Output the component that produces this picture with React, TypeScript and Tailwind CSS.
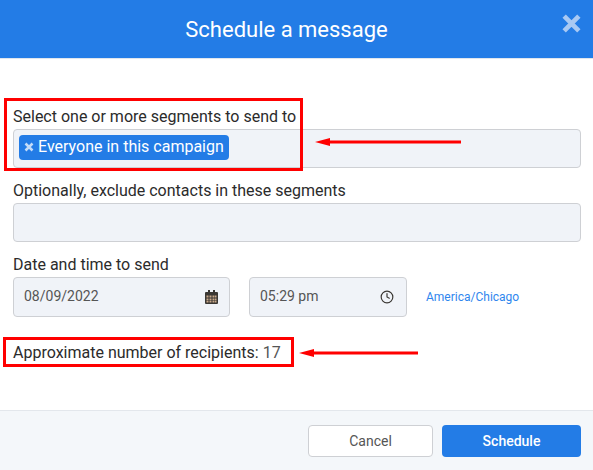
import { Clock } from 'lucide-react'

const fieldBox = 'rounded-[4px] border border-[#ced0d4] bg-[#f0f3f8]'

function CrossIcon({ size, stroke, className }: { size: number; stroke: number; className: string }) {
  return (
    <svg width={size} height={size} viewBox="0 0 20 20" className={className}>
      <path d="M3 3l14 14M17 3L3 17" stroke="currentColor" strokeWidth={stroke} fill="none" />
    </svg>
  )
}

function CalendarIcon() {
  return (
    <svg width="13" height="14" viewBox="0 0 13 14" className="shrink-0">
      <path d="M3 0h2v2h3V0h2v2h2a1 1 0 0 1 1 1v10a1 1 0 0 1-1 1H1a1 1 0 0 1-1-1V3a1 1 0 0 1 1-1h2z" fill="#3a3733" />
      <path d="M1.5 5.5h2v2h-2zM4.5 5.5h2v2h-2zM7.5 5.5h2v2h-2zM10 5.5h1.5v2H10zM1.5 8.5h2v2h-2zM4.5 8.5h2v2h-2zM7.5 8.5h2v2h-2zM10 8.5h1.5v2H10zM1.5 11h2v1.5h-2zM4.5 11h2v1.5h-2zM7.5 11h2v1.5h-2zM10 11h1.5v1.5H10z" fill="#c9a98a" />
    </svg>
  )
}

function RedArrow({ className, width }: { className: string; width: number }) {
  return (
    <svg width={width} height="10" viewBox={`0 0 ${width} 10`} className={className}>
      <path d={`M14 5H${width}`} stroke="#ff0000" strokeWidth="3" />
      <path d="M0 5l15-4v8z" fill="#ff0000" />
    </svg>
  )
}

export default function App() {
  return (
    <div className="relative flex h-[470px] w-[593px] flex-col overflow-hidden bg-white font-['Roboto',sans-serif] text-[16px] text-[#2b2b2b]">
      <header className="relative flex h-[59px] shrink-0 items-center justify-center border-b border-[#dfe6ee] bg-[#237ce6] pr-[20px]">
        <h1 className="text-[22px] font-normal text-white">Schedule a message</h1>
        <CrossIcon size={21} stroke={4.5} className="absolute left-[561px] top-[13px] text-[#a9c9f3]" />
      </header>

      <main className="flex flex-1 flex-col pl-[13px] pr-3 pt-[48px]">
        <label className="h-[22px] leading-[20px]">Select one or more segments to send to</label>
        <div className={`${fieldBox} flex h-[39px] w-[568px] items-start px-[5px] pt-[5px]`}>
          <span className="flex h-[25px] items-center gap-[4px] rounded-[4px] bg-[#237ce6] pb-[2px] pl-[5px] pr-[5px] text-white">
            <CrossIcon size={10} stroke={5} className="text-[#c5dcf8]" />
            Everyone in this campaign
          </span>
        </div>

        <label className="mt-[13px] h-[22px] leading-[20px]">Optionally, exclude contacts in these segments</label>
        <div className={`${fieldBox} h-[39px] w-[568px]`} />

        <label className="mt-[13px] h-[22px] leading-[20px]">Date and time to send</label>
        <div className="flex items-center">
          <div className={`${fieldBox} flex h-[40px] w-[217px] items-center justify-between pb-[1px] pl-[10px] pr-[11px] text-[14px] text-[#555]`}>
            08/09/2022
            <CalendarIcon />
          </div>
          <div className={`${fieldBox} ml-[19px] flex h-[40px] w-[158px] items-center justify-between pb-[1px] pl-[10px] pr-[12px] text-[14px] text-[#555]`}>
            05:29 pm
            <Clock size={14} strokeWidth={2} className="text-[#3a3733]" />
          </div>
          <a className="ml-[19px] text-[12px] text-[#2f86ee]">America/Chicago</a>
        </div>

        <p className="mt-[26px] leading-[20px]">
          Approximate number of recipients: <span className="text-[#555]">17</span>
        </p>
      </main>

      <footer className="flex h-[60px] shrink-0 items-center justify-end gap-[9px] border-t border-[#e3e7ec] bg-[#f4f7fa] pr-3">
        <button className="h-[32px] w-[125px] rounded-[4px] border border-[#ced0d4] bg-white pt-[1px] text-[14px] text-[#555]">Cancel</button>
        <button className="h-[32px] w-[139px] rounded-[4px] bg-[#237ce6] pt-[1px] text-[14px] font-medium text-white">Schedule</button>
      </footer>

      {/* annotations drawn on top of the screenshot */}
      <div className="absolute left-[4px] top-[98px] h-[73px] w-[299px] border-[3px] border-[#ff0000]" />
      <div className="absolute left-[3px] top-[337px] h-[30px] w-[291px] border-[3px] border-[#ff0000]" />
      <RedArrow className="absolute left-[315px] top-[137px]" width={146} />
      <RedArrow className="absolute left-[299px] top-[348px]" width={119} />
    </div>
  )
}
